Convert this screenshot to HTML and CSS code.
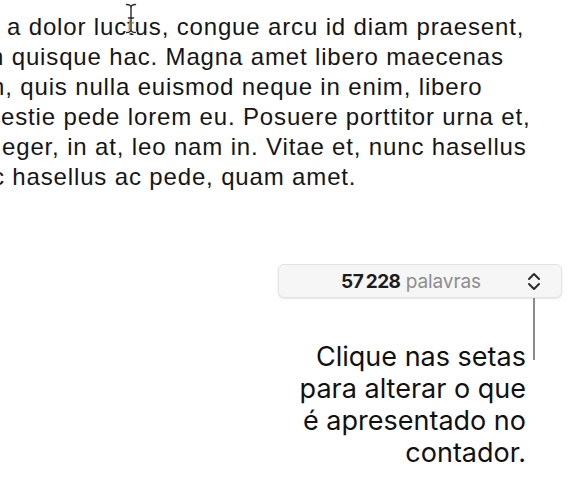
FILE: index.html
```html
<!DOCTYPE html>
<html lang="pt">
<head>
<meta charset="utf-8">
<title>Contador de palavras</title>
<link rel="stylesheet" href="styles.css">
</head>
<body>
<div class="page">
  <div class="doc">
    <div class="ln l1">a dolor luctus, congue arcu id diam praesent,</div>
    <div class="ln l2">n quisque hac. Magna amet libero maecenas</div>
    <div class="ln l3">n, quis nulla euismod neque in enim, libero</div>
    <div class="ln l4">estie pede lorem eu. Posuere porttitor urna et,</div>
    <div class="ln l5">eger, in at, leo nam in. Vitae et, nunc hasellus</div>
    <div class="ln l6">c hasellus ac pede, quam amet.</div>
    <svg class="ibeam" width="14" height="32" viewBox="0 0 14 32" aria-hidden="true">
      <path d="M2.5 1.5 Q7 1.5 7 4.5 Q7 1.5 11.5 1.5 M7 4.5 V26.5 M4.5 15 H9.5 M2.5 29.5 Q7 29.5 7 26.5 Q7 29.5 11.5 29.5" fill="none" stroke="#fff" stroke-width="3" stroke-linecap="round"/>
      <path d="M2.5 1.5 Q7 1.5 7 4.5 Q7 1.5 11.5 1.5 M7 4.5 V26.5 M4.5 15 H9.5 M2.5 29.5 Q7 29.5 7 26.5 Q7 29.5 11.5 29.5" fill="none" stroke="#2a2a2a" stroke-width="1.4" stroke-linecap="round"/>
    </svg>
  </div>

  <div class="counter-row">
    <div class="counter">
      <span class="count"><b>57&#8201;228</b> <span class="unit">palavras</span></span>
      <svg class="stepper" width="14" height="19" viewBox="0 0 14 19" aria-hidden="true">
        <path d="M2 7 L7 2 L12 7 M2 12 L7 17 L12 12" fill="none" stroke="#2b2b2b" stroke-width="2" stroke-linecap="round" stroke-linejoin="round"/>
      </svg>
    </div>
  </div>

  <div class="callout">
    <div class="caption">Clique nas setas<br>para alterar o que<br>é apresentado no<br>contador.</div>
    <div class="leader"></div>
  </div>
</div>
</body>
</html>
```

FILE: styles.css
```css
html, body {
  margin: 0;
  padding: 0;
  background: #ffffff;
}

.page {
  width: 577px;
  height: 486px;
  overflow: hidden;
}

.doc {
  position: relative;
  padding-top: 12px;
  font-family: "Liberation Sans", Arial, sans-serif;
  font-size: 24px;
  letter-spacing: 0.85px;
  line-height: 30px;
  color: #161616;
  white-space: nowrap;
}

.ln { height: 30px; }
.l1 { text-indent: 7px; }
.l2 { text-indent: -10px; }
.l3 { text-indent: -9px; }
.l4 { text-indent: 1px; }
.l5 { text-indent: 2px; }
.l6 { text-indent: -8px; }

.ibeam {
  position: absolute;
  left: 124px;
  top: 3px;
}

.counter-row {
  display: flex;
  justify-content: flex-end;
  padding-right: 15px;
  margin-top: 72px;
}

.counter {
  box-sizing: border-box;
  width: 284px;
  height: 34px;
  display: flex;
  align-items: center;
  padding-left: 62px;
  padding-right: 20px;
  background: #f6f6f6;
  border: 1px solid #e3e3e3;
  border-radius: 6px;
  box-shadow: 0 1px 2px rgba(0, 0, 0, 0.10);
  font-family: Inter, "Liberation Sans", sans-serif;
  font-size: 19px;
  letter-spacing: -0.1px;
}

.count b {
  font-weight: 700;
  color: #1c1c1c;
  letter-spacing: -0.5px;
}

.unit {
  color: #8d8d8d;
}

.stepper {
  margin-left: auto;
  margin-top: 1px;
}

.callout {
  display: flex;
  justify-content: flex-end;
  align-items: flex-start;
  padding-right: 42px;
}

.caption {
  margin-top: 43px;
  margin-right: 7px;
  text-align: right;
  font-family: Inter, "Liberation Sans", sans-serif;
  font-size: 27px;
  line-height: 32px;
  color: #111111;
}

.leader {
  width: 2px;
  height: 62px;
  background: #8a8a8a;
}
```
